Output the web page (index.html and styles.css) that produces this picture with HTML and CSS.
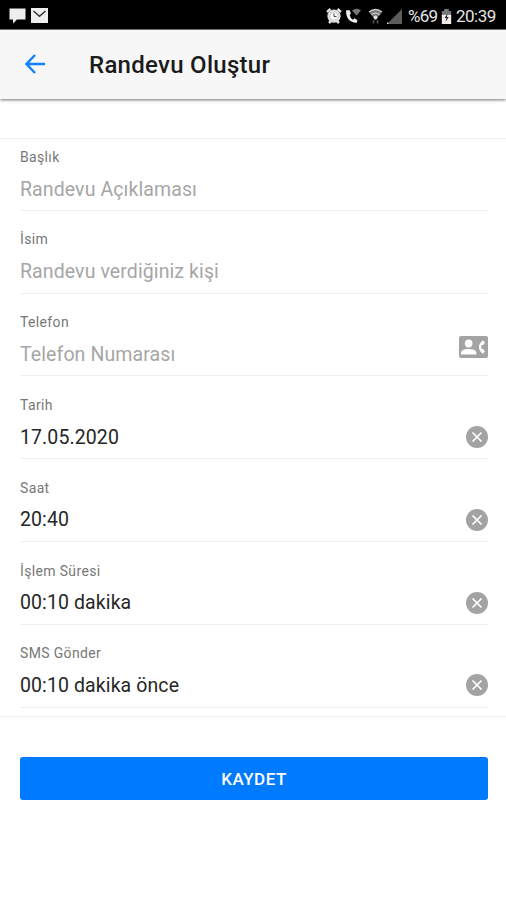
FILE: index.html
```
<!DOCTYPE html>
<html lang="tr">
<head>
  <meta charset="UTF-8" />
  <meta name="viewport" content="width=device-width, initial-scale=1.0" />
  <title>Randevu Oluştur</title>
  <link rel="stylesheet" href="styles.css">
</head>
<body>
  <!-- Shared icons -->
  <svg class="sprite" aria-hidden="true">
    <symbol id="icon-clear" viewBox="0 0 22 22">
      <circle cx="11" cy="11" r="11" fill="#a3a3a3" />
      <path d="M6.500 6.500l9 9M15.500 6.500l-9 9" stroke="#fff" stroke-width="1.700" fill="none" />
    </symbol>
  </svg>

  <div class="status-bar">
    <div class="status-left">
      <svg width="17" height="17" viewBox="0 0 17 17"><path d="M.5 1.500h16v11H8l-4 4V12.500H.5z" fill="#eee" /></svg>
      <svg width="17" height="17" viewBox="0 0 17 17">
        <rect x="0" y="1" width="17" height="15" fill="#eee" />
        <path d="M2.500 4l6 5.200L14.500 4" fill="none" stroke="#333" stroke-width="1.500" />
      </svg>
    </div>
    <div class="status-right">
      <svg class="icon-alarm" width="16" height="16" viewBox="0 0 16 16">
        <path d="M1 4l3.500-3M15 4l-3.500-3M3 15l2-2M13 15l-2-2" stroke="#ddd" stroke-width="2.500" />
        <circle cx="8" cy="8.200" r="6.600" fill="#ddd" />
        <circle cx="8" cy="8.200" r="3.900" fill="#fff" stroke="#bbb" stroke-width=".6" />
        <path d="M8 5.500v3h2.500" fill="none" stroke="#444" />
      </svg>
      <svg class="icon-call" width="16" height="16" viewBox="0 0 16 16">
        <path d="M1 2.500Q1 14 11.500 15l1-2.700-3-2-1.700 1.400Q5.200 10 4.700 7L6 5.300 4.200 2z" fill="#eee" />
        <path d="M7 2.500q4.500-3.500 9 0l-4.500 5z" fill="#777" />
      </svg>
      <svg class="icon-wifi" width="15" height="17" viewBox="0 0 15 17">
        <path d="M.8 3.800q6.700-5.600 13.400 0L7.500 12z" fill="#777" />
        <path d="M1 4q6.500-5 13 0M3.200 6.800q4.300-3.300 8.600 0" fill="none" stroke="#ccc" stroke-width="1.300" />
        <circle cx="7.500" cy="9.500" r="2" fill="#ddd" />
        <path d="M5.500 12v3.500M9.500 12v3.500" stroke="#555" stroke-width="1.600" />
      </svg>
      <svg class="icon-signal" width="15" height="15" viewBox="0 0 15 15">
        <path d="M15 0v15H0z" fill="#5c5c5c" />
        <path d="M0 15v-1.500h1.500V15z" fill="#ccc" />
      </svg>
      <span class="battery-level">%69</span>
      <svg class="icon-battery" width="11" height="15" viewBox="0 0 11 16">
        <path d="M3 0h5v2h2.500v4H.5V2H3z" fill="#777" />
        <path d="M.5 6h10v10H.5z" fill="#eee" />
        <path d="M6.500 5L3.500 9.700h2L4.500 13.500l3.500-5H6z" fill="#222" />
      </svg>
      <span class="clock">20:39</span>
    </div>
  </div>

  <header class="toolbar">
    <a href="#" class="back-button" aria-label="Geri">
      <svg width="20" height="20" viewBox="0 0 20 20"><path d="M10 1L1.500 10l8.500 9M1.500 10H20" fill="none" stroke="#157efb" stroke-width="2.500" /></svg>
    </a>
    <h1 class="toolbar-title">Randevu Oluştur</h1>
  </header>

  <main>
    <form class="form-list">
      <div class="field">
        <div class="field-text">
          <div class="field-label">Başlık</div>
          <div class="field-value placeholder">Randevu Açıklaması</div>
        </div>
      </div>
      <div class="field">
        <div class="field-text">
          <div class="field-label">İsim</div>
          <div class="field-value placeholder">Randevu verdiğiniz kişi</div>
        </div>
      </div>
      <div class="field">
        <div class="field-text">
          <div class="field-label">Telefon</div>
          <div class="field-value placeholder">Telefon Numarası</div>
        </div>
        <svg class="contact-icon" width="29" height="22" viewBox="0 0 30 22" preserveAspectRatio="none">
          <rect width="30" height="22" rx="2" fill="#a3a3a3" />
          <circle cx="10" cy="7.500" r="4" fill="#fff" />
          <path d="M2 18.500v-1.300q0-4.200 8-4.200t8 4.200v1.300z" fill="#fff" />
          <path d="M26.800 6.500l-2-2.300q-8.500 6.800 0 13.600l2-2.300-1.700-2.400h-1.700q-.8-2.100 0-4.200h1.700z" fill="#fff" />
        </svg>
      </div>
      <div class="field">
        <div class="field-text">
          <div class="field-label">Tarih</div>
          <div class="field-value">17.05.2020</div>
        </div>
        <svg class="clear-icon"><use href="#icon-clear" /></svg>
      </div>
      <div class="field">
        <div class="field-text">
          <div class="field-label">Saat</div>
          <div class="field-value">20:40</div>
        </div>
        <svg class="clear-icon"><use href="#icon-clear" /></svg>
      </div>
      <div class="field">
        <div class="field-text">
          <div class="field-label">İşlem Süresi</div>
          <div class="field-value">00:10 dakika</div>
        </div>
        <svg class="clear-icon"><use href="#icon-clear" /></svg>
      </div>
      <div class="field">
        <div class="field-text">
          <div class="field-label">SMS Gönder</div>
          <div class="field-value">00:10 dakika önce</div>
        </div>
        <svg class="clear-icon"><use href="#icon-clear" /></svg>
      </div>
    </form>
    <button type="button" class="save-button">KAYDET</button>
  </main>
</body>
</html>
```
FILE: styles.css
```
:root {
  --primary: #007aff;
  --line: #eeeeee;
  --label: #777;
  --placeholder: #a6a6a6;
}
* {
  margin: 0;
  padding: 0;
  box-sizing: border-box;
}
body {
  font-family: Roboto, sans-serif;
  background-color: #fff;
  color: #262626;
  min-height: 100vh;
}
svg {
  display: block;
  flex-shrink: 0;
}
.sprite {
  width: 0;
  height: 0;
  float: left;
}
/* Status Bar */
.status-bar {
  display: flex;
  justify-content: space-between;
  height: 30px;
  padding: 0 9px;
  background-color: #000;
  border-bottom: 1px solid #777;
  color: #e4e4e4;
}
.status-left {
  display: flex;
  gap: 5px;
  padding-top: 7px;
}
.status-right {
  display: flex;
  align-items: center;
  padding-top: 3px;
}
.icon-call {
  margin-left: 3px;
}
.icon-wifi {
  margin-left: 7px;
}
.icon-signal {
  margin-left: 4px;
}
.battery-level {
  margin-left: 6px;
  width: 30px;
  font-size: 17px;
  letter-spacing: -0.7px;
}
.icon-battery {
  margin-left: 3px;
}
.clock {
  margin-left: 4px;
  width: 41px;
  font-size: 17px;
  letter-spacing: -0.5px;
}
/* Toolbar */
.toolbar {
  display: flex;
  align-items: center;
  height: 69px;
  padding: 0 0 1px 25px;
  background-color: #f7f7f7;
  box-shadow: 0 1px 3px rgba(0, 0, 0, 0.55);
}
.toolbar-title {
  margin: 1px 0 0 44px;
  font-size: 24px;
  font-weight: 500;
  letter-spacing: 0.28px;
  color: #1b1b1b;
}
/* Form */
.form-list {
  margin-top: 39px;
  padding: 0 18px 8px 20px;
  border-top: 1px solid var(--line);
  border-bottom: 1px solid var(--line);
}
.field {
  display: flex;
  justify-content: space-between;
  height: 72.8px;
  margin-bottom: 10px;
  border-bottom: 1px solid var(--line);
}
.field:first-child {
  height: 72.2px;
  margin-top: -0.4px;
}
.field:last-child {
  margin-bottom: 0;
}
.field-label {
  margin-top: 9.6px;
  font-size: 14px;
  line-height: 18px;
  letter-spacing: 0.35px;
  color: var(--label);
}
.field-value {
  margin-top: 10.7px;
  font-size: 19.5px;
  line-height: 26px;
  letter-spacing: 0.1px;
}
.placeholder {
  color: var(--placeholder);
}
.contact-icon {
  margin-top: 32px;
}
.clear-icon {
  width: 22px;
  height: 22px;
  margin-top: 39.7px;
}
.save-button {
  display: block;
  width: 468px;
  height: 43px;
  margin: 40.5px 18px 0 20px;
  border: none;
  border-radius: 3px;
  background-color: var(--primary);
  color: #fff;
  font-family: inherit;
  font-size: 17px;
  font-weight: 500;
  letter-spacing: 0.5px;
}
```
